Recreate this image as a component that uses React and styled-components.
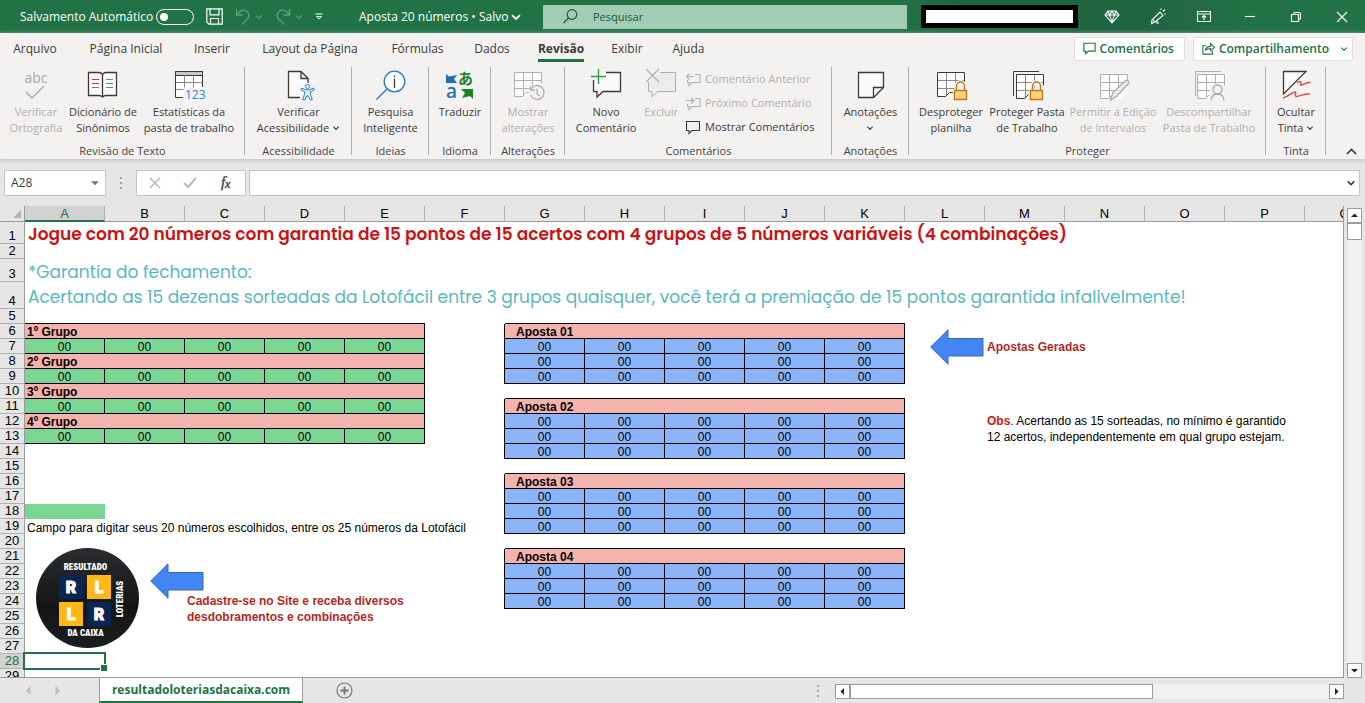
import styled, { createGlobalStyle, css } from 'styled-components';

const GlobalStyle = createGlobalStyle`
  * {
    box-sizing: border-box;
  }

  body {
    margin: 0;
    background: #e6e6e6;
    color: #3b3a39;
    font-family: 'Open Sans', 'Noto Sans', sans-serif;
    font-size: 11px;
    line-height: 16px;
  }

  button, input {
    margin: 0;
    padding: 0;
    border: 0;
    background: none;
    color: inherit;
    font: inherit;
  }

  svg {
    display: block;
    flex: none;
    overflow: visible;
  }
`;

const Page = styled.div`
  display: flex;
  flex-direction: column;
  height: 100vh;
  overflow: hidden;
`;

/* title bar */

const TitleBar = styled.header`
  display: flex;
  align-items: center;
  flex: none;
  height: 33px;
  padding-left: 20px;
  background: linear-gradient(90deg, #217346 66%, #1f6640 70%, #1f6640 84%, #217346 92%);
  color: #fff;
`;

const AutoSave = styled.label`
  display: flex;
  align-items: center;
  width: 186px;
  font-size: 12px;
  white-space: nowrap;
`;

const Toggle = styled.input`
  display: flex;
  align-items: center;
  flex: none;
  width: 38px;
  height: 16px;
  margin-left: 3px;
  padding-left: 3px;
  appearance: none;
  border: 1px solid #fff;
  border-radius: 8px;

  &::before {
    content: '';
    width: 8px;
    height: 8px;
    border-radius: 50%;
    background: #fff;
  }
`;

const QuickAccess = styled.div`
  display: flex;
  align-items: center;
  gap: 12px;
  width: 153px;
`;

const QuickButton = styled.button`
  display: flex;
  align-items: center;
  gap: 4px;
  opacity: ${({ $faded }) => ($faded ? 0.3 : 1)};
`;

const FileName = styled.button`
  display: flex;
  align-items: center;
  gap: 2px;
  width: 184px;
  font-size: 12px;
  white-space: nowrap;
`;

const SearchBox = styled.label`
  display: flex;
  align-items: center;
  flex: 1;
  gap: 15px;
  height: 24px;
  padding-left: 20px;
  background: #a0cdb3;
  color: #185c37;

  input {
    flex: 1;
    min-width: 0;
    outline: none;
    font-size: 11px;
  }

  input::placeholder {
    color: #185c37;
    opacity: 1;
  }
`;

const Account = styled.div`
  width: 157px;
  height: 23px;
  margin: 0 11px 0 14px;
  border: 5px solid #000;
  background: #fff;
`;

const WindowButton = styled.button`
  display: flex;
  justify-content: center;
  align-items: center;
  width: 46px;
  height: 33px;
`;

/* ribbon */

const Ribbon = styled.section`
  flex: none;
  background: #f3f2f1;
  box-shadow: 0 1px 5px #b8b8b8;
`;

const Tabs = styled.nav`
  display: flex;
  align-items: center;
  height: 31px;
  padding-right: 12px;
`;

const Tab = styled.button`
  display: flex;
  justify-content: center;
  width: ${({ $width }) => $width}px;
  font-size: 12px;
  white-space: nowrap;

  span {
    padding: 6px 0 2px;
    border-bottom: 3px solid transparent;
  }

  ${({ $active }) => $active && css`
    font-weight: 700;

    span {
      border-color: #217346;
    }
  `}
`;

const TabActions = styled.div`
  display: flex;
  gap: 8px;
  margin-left: auto;
`;

const ActionButton = styled.button`
  display: flex;
  align-items: center;
  gap: 4px;
  height: 24px;
  padding: 0 ${({ $end }) => $end || 10}px 0 8px;
  border: 1px solid #e1dfdd;
  border-radius: 2px;
  background: #fff;
  color: #217346;
  font-size: 12px;
  font-weight: 600;
  white-space: nowrap;
`;

const Groups = styled.div`
  display: flex;
  height: 95px;
  padding-top: 3px;
`;

const Group = styled.div`
  display: flex;
  flex-direction: column;
  justify-content: space-between;
  width: ${({ $width }) => $width}px;
  height: 92px;
  background: linear-gradient(#b3b0ad, #b3b0ad) right top / 1px 88px no-repeat;
`;

const GroupItems = styled.div`
  display: flex;
  justify-content: ${({ $start }) => ($start ? 'flex-start' : 'center')};
  padding: 0 4px 0 ${({ $start }) => $start || 4}px;
`;

const GroupName = styled.div`
  text-align: center;
  color: #444;
`;

const BigButton = styled.button`
  display: flex;
  flex-direction: column;
  align-items: center;
  flex: none;
  gap: 3px;
  width: ${({ $width }) => $width}px;
  padding-top: 2px;
  color: ${({ disabled }) => (disabled ? '#b1afad' : '#3b3a39')};
  white-space: nowrap;
`;

const BigLabel = styled.span`
  display: flex;
  justify-content: center;
  align-items: center;
  gap: 3px;
  height: 16px;
`;

const SmallList = styled.div`
  display: flex;
  flex-direction: column;
  padding-left: 4px;
`;

const SmallButton = styled.button`
  display: flex;
  align-items: center;
  gap: 4px;
  height: 24px;
  color: ${({ disabled }) => (disabled ? '#b1afad' : '#3b3a39')};
  white-space: nowrap;
`;

const Collapse = styled.button`
  display: flex;
  align-items: flex-end;
  margin-left: auto;
  padding: 0 8px 2px;
`;

/* formula bar */

const FormulaBar = styled.div`
  display: flex;
  align-items: center;
  flex: none;
  height: 47px;
  padding: 0 5px 0 4px;
`;

const BarBox = styled.div`
  display: flex;
  align-items: center;
  justify-content: space-between;
  width: ${({ $width }) => ($width ? `${$width}px` : 'auto')};
  flex: ${({ $width }) => ($width ? 'none' : '1')};
  height: 26px;
  padding: 0 ${({ $pad }) => $pad || 6}px;
  border: 1px solid #c6c6c6;
  background: #fff;

  input {
    flex: 1;
    min-width: 0;
    outline: none;
    font-size: 12px;
  }
`;

const Grip = styled.div`
  display: flex;
  justify-content: center;
  width: 30px;
`;

const Spacer = styled.div`
  width: 3px;
`;

/* sheet */

const Workspace = styled.main`
  display: flex;
  flex: 1;
  min-height: 0;
`;

const SheetFrame = styled.div`
  position: relative;
  flex: 1;
  min-width: 0;
  overflow: hidden;
  border-right: 1px solid #9b9b9b;
  border-bottom: 1px solid #9b9b9b;
  background: #fff;
`;

const Sheet = styled.table`
  width: 1385px;
  table-layout: fixed;
  border-collapse: separate;
  border-spacing: 0;
  color: #000;
  font-family: 'Liberation Sans', Arial, sans-serif;
  font-size: 12px;
  line-height: 12px;
`;

const Row = styled.tr`
  height: ${({ $height }) => $height}px;
`;

const ColumnHead = styled.th`
  height: 16px;
  padding: 1px 0 0;
  border-right: 1px solid #b1b1b1;
  border-bottom: 1px solid #9b9b9b;
  background: #e6e6e6;
  font-size: 13px;
  font-weight: 400;

  ${({ $active }) => $active && css`
    border-bottom: 2px solid #217346;
    background: #d2d2d2;
    color: #217346;
  `}
`;

const Corner = styled(ColumnHead)`
  border-right-color: #9b9b9b;

  svg {
    margin-left: 13px;
  }
`;

const RowHead = styled.th`
  padding: 0;
  border-right: 1px solid ${({ $active }) => ($active ? '#217346' : '#9b9b9b')};
  border-bottom: 1px solid #b1b1b1;
  background: ${({ $active }) => ($active ? '#d2d2d2' : '#e6e6e6')};
  color: ${({ $active }) => ($active ? '#217346' : '#000')};
  font-size: 13px;
  font-weight: 400;
  line-height: 14px;
  vertical-align: bottom;
`;

const fills = {
  head: '#f5b3ae',
  green: '#7bd694',
  blue: '#8cb4f8',
  sample: '#7bd694',
};

const Cell = styled.td`
  position: ${({ $selected }) => ($selected ? 'relative' : 'static')};
  padding: 2px 0 0 ${({ $indent }) => $indent || 0}px;
  border-right: ${({ $right }) => ($right ? '1px solid #000' : 'none')};
  border-bottom: ${({ $bottom }) => ($bottom ? '1px solid #000' : 'none')};
  background: ${({ $fill }) => fills[$fill] || 'transparent'};
  font-weight: ${({ $fill }) => ($fill === 'head' ? 700 : 400)};
  text-align: ${({ $fill }) => ($fill === 'green' || $fill === 'blue' ? 'center' : 'left')};
  white-space: nowrap;
`;

const Selection = styled.div`
  position: absolute;
  inset: -2px -1px -1px -2px;
  border: 2px solid #217346;

  &::after {
    content: '';
    position: absolute;
    right: -3px;
    bottom: -3px;
    width: 6px;
    height: 6px;
    border-top: 1px solid #fff;
    border-left: 1px solid #fff;
    background: #217346;
  }
`;

const Headline = styled.div`
  color: #c81414;
  font-family: Poppins, Inter, sans-serif;
  font-size: 17px;
  font-weight: 600;
  line-height: 20px;
`;

const Guarantee = styled.div`
  color: #5ab8be;
  font-family: Poppins, Inter, sans-serif;
  font-size: 17px;
  font-weight: 400;
  line-height: 20px;
`;

const Floating = styled.div`
  position: absolute;
  left: ${({ $x }) => $x}px;
  top: ${({ $y }) => $y}px;
`;

const Note = styled.p`
  margin: 0;
  color: ${({ $red }) => ($red ? '#b02a24' : '#000')};
  font-family: 'Liberation Sans', Arial, sans-serif;
  font-size: 12px;
  font-weight: ${({ $red }) => ($red ? 700 : 400)};
  line-height: 16px;
  white-space: nowrap;

  b {
    color: #d01515;
  }
`;

/* scroll bars and sheet tabs */

const VerticalScroll = styled.div`
  display: flex;
  flex-direction: column;
  width: 15px;
  margin: 2px 3px 0;
  background: #f1f1f1;
`;

const ScrollButton = styled.button`
  display: flex;
  justify-content: center;
  align-items: center;
  flex: none;
  width: 15px;
  height: 15px;
  border: 1px solid #9b9b9b;
  background: #fff;
`;

const Thumb = styled.div`
  flex: ${({ $grow }) => $grow || 'none'};
  height: ${({ $grow }) => ($grow ? 15 : 17)}px;
  border: 1px solid #9b9b9b;
  background: #fff;
`;

const Track = styled.div`
  flex: ${({ $grow }) => $grow || 1};
`;

const Footer = styled.footer`
  display: flex;
  flex: none;
  height: 25px;
  padding-right: 21px;
`;

const SheetNav = styled.div`
  display: flex;
  align-items: center;
  gap: 20px;
  width: 99px;
  padding-left: 24px;
`;

const SheetTab = styled.button`
  width: 204px;
  border: 1px solid #9b9b9b;
  border-top: 0;
  border-bottom: 2px solid #217346;
  background: #fff;
  color: #217346;
  font-size: 12px;
  font-weight: 700;
`;

const AddSheet = styled.button`
  display: flex;
  align-items: center;
  padding-left: 33px;
`;

const HorizontalScroll = styled.div`
  display: flex;
  width: 509px;
  height: 15px;
  margin-top: 6px;
  background: #f1f1f1;
`;

const FooterGrip = styled.div`
  display: flex;
  align-items: center;
  margin-left: auto;
  padding-right: 15px;
`;

function Chevron({ size = 8, up = false }) {
  return (
    <svg width={size} height={size} viewBox="0 0 8 8" fill="none" stroke="currentColor" strokeWidth="1.2">
      <path d={up ? 'M0.7 5.8 4 2.5l3.3 3.3' : 'M1.4 2.7 4 5.3l2.6-2.6'} />
    </svg>
  );
}

function Triangle({ dir, color = '#222', size = 7 }) {
  const points = {
    up: '0,5 7,5 3.5,1.5',
    down: '0,2 7,2 3.5,5.5',
    left: '5,0 5,7 1.5,3.5',
    right: '2,0 2,7 5.5,3.5',
  };

  return (
    <svg width={size} height={size} viewBox="0 0 7 7">
      <polygon points={points[dir]} fill={color} />
    </svg>
  );
}

function Dots() {
  return (
    <svg width="3" height="12" viewBox="0 0 3 12" fill="#a6a6a6">
      <path d="M0 0h2v2H0zM0 5h2v2H0zM0 10h2v2H0z" />
    </svg>
  );
}

function Icon({ children }) {
  return (
    <svg width="32" height="32" viewBox="0 0 32 32" fill="none" stroke="#3b3a39">
      {children}
    </svg>
  );
}

function GridShape({ x = 2.5, y = 3.5, color = '#3b3a39', line = '#8a8886' }) {
  return (
    <g transform={`translate(${x} ${y})`}>
      <path d="M0 0h27v18l-7 6H0z" fill="#fff" stroke="none" opacity=".8" />
      <path d="M9 0v24M18 0v18M0 8h27M0 16h20" stroke={line} />
      <path d="M27 11V0H0v24h8l4-4h4" stroke={color} />
    </g>
  );
}

function Lock() {
  return (
    <g>
      <path d="M18 20h14v12H18z" fill="#f3f2f1" stroke="none" />
      <path d="M21.5 22v-5a4 4 0 0 1 8 0v5" stroke="#f3f2f1" strokeWidth="4" />
      <path d="M21.5 22v-5a4 4 0 0 1 8 0v5" stroke="#c8731c" strokeWidth="1.3" />
      <path d="M19.5 21.5h12v9h-12z" fill="#fbd277" stroke="#c8731c" strokeWidth="1.3" />
    </g>
  );
}

const icons = {
  spelling: (
    <Icon>
      <text x="16" y="14" textAnchor="middle" fontSize="14" fill="#a9a7a5" stroke="none">abc</text>
      <path d="M6 23l6 6 12-12" stroke="#a9a7a5" strokeWidth="1.3" />
    </Icon>
  ),
  thesaurus: (
    <Icon>
      <path d="M15.5 5.5c-1-1.5-2-2-3.5-2H1.5v23H12c1.5 0 2.5.5 3.5 1.5 1-1 2-1.5 3.5-1.5h10.5v-23H19c-1.5 0-2.5.5-3.5 2z" fill="#fafafa" strokeWidth="1.3" />
      <path d="M15.5 5.5V28" strokeWidth="1.3" />
      <path d="M5 10.5h7M5 14.5h7" stroke="#d13438" />
      <path d="M5 18.5h7M19 10.5h7M19 14.5h7M19 18.5h7" stroke="#7a8088" />
    </Icon>
  ),
  statistics: (
    <Icon>
      <path d="M2.5 2.5h27v26h-27z" fill="#fff" stroke="none" />
      <path d="M2.5 2.5h27v4h-27z" fill="#c8c6c4" />
      <path d="M11.5 6.5v12M20.5 6.5v12M2.5 13.5h27M2.5 20.5h8" stroke="#8a8886" />
      <path d="M10 28.5H2.5v-26h27V18" />
      <path d="M11 19h21v12H11z" fill="#f3f2f1" stroke="none" />
      <text x="12" y="30" fontSize="12" fill="#2b88d0" stroke="none">123</text>
    </Icon>
  ),
  accessibility: (
    <Icon>
      <path d="M17 28.5H5.5v-26H18l7 7V14" fill="#fafafa" strokeWidth="1.3" />
      <path d="M18 2.5v7h7" strokeWidth="1.3" />
      <circle cx="24.5" cy="17.5" r="2" fill="#fff" stroke="#2b7cc4" />
      <path d="M18.5 19l4 1.8h4l4-1.8.7 1.8-4 2 .3 2.7 1.8 5-1.8.7-3-5-3 5-1.8-.7 1.8-5 .3-2.7-4-2z" fill="#e5f1fb" stroke="#2b7cc4" />
    </Icon>
  ),
  lookup: (
    <Icon>
      <circle cx="19.5" cy="12.5" r="10.3" fill="#fff" stroke="#2b7cc4" strokeWidth="1.3" />
      <path d="M12 20L1.5 30.5" stroke="#2b7cc4" strokeWidth="1.5" />
      <path d="M19.5 9.5V19M19.5 6.5V8" strokeWidth="1.3" />
    </Icon>
  ),
  translate: (
    <Icon>
      <path d="M2 5l3 2.5L13 6l-3 4 3 4H2z" fill="#1f6fb8" stroke="none" />
      <text x="2" y="29" fontSize="19" fontWeight="600" fill="#1f6fb8" stroke="none">a</text>
      <text x="14" y="15" fontSize="15" fontWeight="700" fontFamily="'Noto Sans CJK JP', sans-serif" fill="#1b8427" stroke="none">あ</text>
      <path d="M17 20h12v10l-3-3-8 2 3-5z" fill="#1b8427" stroke="none" />
    </Icon>
  ),
  changes: (
    <Icon>
      <GridShape color="#b1afad" line="#b1afad" />
      <circle cx="25" cy="24" r="8.5" fill="#f3f2f1" stroke="none" />
      <path d="M19 20a7 7 0 1 1-.5 6M18.5 16.5V21H23M25 19.5V25l3 2" stroke="#b1afad" strokeWidth="1.3" />
    </Icon>
  ),
  newComment: (
    <Icon>
      <path d="M3.5 12v10.500H7V28l6-5.500h17.500v-19H13" fill="#fafafa" stroke="none" />
      <path d="M3.500 11v11.500H7V28l6-5.500h17.500v-19H16" strokeWidth="1.3" />
      <path d="M8.5 0v15M1 7.5h15" stroke="#2f9e44" strokeWidth="1.3" />
    </Icon>
  ),
  deleteComment: (
    <Icon>
      <path d="M3.5 13v9.5H7V28l6-5.5h17.5v-19H15" fill="#ececec" stroke="#b1afad" />
      <path d="M1 0l13 13M14 0L1 13" stroke="#b1afad" strokeWidth="1.2" />
    </Icon>
  ),
  notes: (
    <Icon>
      <path d="M3.5 3.5h25v15l-10 10h-15z" fill="#fafafa" strokeWidth="1.3" />
      <path d="M28.5 18.5h-10v10" strokeWidth="1.3" />
    </Icon>
  ),
  unprotectSheet: (
    <Icon>
      <GridShape />
      <Lock />
    </Icon>
  ),
  protectBook: (
    <Icon>
      <path d="M2.5 27V2.5H28" />
      <GridShape x={5.5} y={5.5} />
      <Lock />
    </Icon>
  ),
  editRanges: (
    <Icon>
      <GridShape x={3.5} y={5.5} color="#b1afad" line="#b1afad" />
      <path d="M13.5 31l2.5-7.5L28.5 11.5q3.5-1 3.5 2.5L20 27z" fill="#ebeae9" stroke="#a9a7a5" strokeWidth="1.2" />
    </Icon>
  ),
  unshareBook: (
    <Icon>
      <path d="M2.5 27V2.5H28" stroke="#b1afad" />
      <GridShape x={4.5} y={5.5} color="#b1afad" line="#b1afad" />
      <path d="M17 15h14v17H17z" fill="#f3f2f1" stroke="none" />
      <circle cx="24.5" cy="20.5" r="4.5" stroke="#a9a7a5" strokeWidth="1.3" />
      <path d="M18 31.5c0-9 13-9 13 0" stroke="#a9a7a5" strokeWidth="1.3" />
    </Icon>
  ),
  hideInk: (
    <Icon>
      <path d="M3.5 2.5H26L3.5 25z" fill="#fafafa" strokeWidth="1.3" />
      <path d="M17 14c4-3 5-1 3.5 2 3 0 6-3 10-2.5M3 29c5-1 9-6 12-6 2 0-1 4 1 4.5 4 0 8-3 14-2.5" stroke="#e0484c" strokeWidth="1.5" />
    </Icon>
  ),
};

function BubbleIcon({ arrow }) {
  return (
    <svg width="15" height="15" viewBox="0 0 15 15" fill="none" stroke="currentColor" strokeWidth="1.1">
      <path d={arrow ? 'M9 2.5h5v8H6l-3 3v-3H1.5V8' : 'M.5 1.5h13v9H6l-3 3v-3H.5z'} />
      {arrow === 'left' && <path d="M8 4.5H.5M3.5 1.5l-3 3 3 3" />}
      {arrow === 'right' && <path d="M0 4.5h8M5 1.5l3 3-3 3" />}
    </svg>
  );
}

function RibbonButton({
  icon, width, lines, disabled, menu,
}) {
  return (
    <BigButton type="button" $width={width} disabled={disabled}>
      {icons[icon]}
      <span>
        {lines.map((line, index) => (
          <BigLabel key={line || 'menu'}>
            {line}
            {menu && index === lines.length - 1 && <Chevron />}
          </BigLabel>
        ))}
      </span>
    </BigButton>
  );
}

const tabs = [
  ['Arquivo', 70],
  ['Página Inicial', 112],
  ['Inserir', 60],
  ['Layout da Página', 136],
  ['Fórmulas', 79],
  ['Dados', 70],
  ['Revisão', 68],
  ['Exibir', 64],
  ['Ajuda', 59],
];

const columns = 'ABCDEFGHIJKLMNOPQ'.split('');
const rows = Array.from({ length: 29 }, (_, index) => index + 1);
const rowHeights = { 1: 22, 3: 23, 4: 27 };
const betStarts = [6, 11, 16, 21];

// column index 0-4 holds the chosen groups, 6-10 the generated bets
function fillOf(row, column) {
  if (column <= 4 && row >= 6 && row <= 13) {
    return row % 2 === 0 ? 'head' : 'green';
  }
  if (column >= 6 && column <= 10) {
    const start = betStarts.find((first) => row >= first && row <= first + 3);
    if (start) {
      return start === row ? 'head' : 'blue';
    }
  }
  return row === 18 && column === 0 ? 'sample' : null;
}

function isBoxed(row, column) {
  const fill = fillOf(row, column);
  return fill !== null && fill !== 'sample';
}

const wideTexts = {
  1: <Headline>Jogue com 20 números com garantia de 15 pontos de 15 acertos com 4 grupos de 5 números variáveis (4 combinações)</Headline>,
  3: <Guarantee>*Garantia do fechamento:</Guarantee>,
  4: <Guarantee>Acertando as 15 dezenas sorteadas da Lotofácil entre 3 grupos quaisquer, você terá a premiação de 15 pontos garantida infalivelmente!</Guarantee>,
};

function SheetRow({ row }) {
  const cells = [];

  if (wideTexts[row]) {
    cells.push(<Cell key="text" colSpan={17} $indent={3}>{wideTexts[row]}</Cell>);
  } else {
    for (let column = 0; column < columns.length; column += 1) {
      const fill = fillOf(row, column);
      let span = 1;
      let content = null;
      let indent = 0;

      if (fill === 'head') {
        span = 5;
        content = column === 0 ? `${row / 2 - 2}º Grupo` : `Aposta 0${betStarts.indexOf(row) + 1}`;
        indent = column === 0 ? 2 : 11;
      } else if (fill === 'green' || fill === 'blue') {
        content = '00';
      } else if (row === 19 && column === 0) {
        span = 6;
        content = 'Campo para digitar seus 20 números escolhidos, entre os 25 números da Lotofácil';
        indent = 2;
      }

      const last = column + span - 1;
      cells.push(
        <Cell
          key={columns[column]}
          colSpan={span}
          $fill={fill}
          $indent={indent}
          $right={isBoxed(row, last) || isBoxed(row, last + 1)}
          $bottom={isBoxed(row, column) || (span === 1 && isBoxed(row + 1, column))}
          $selected={row === 28 && column === 0}
        >
          {content}
          {row === 28 && column === 0 && <Selection />}
        </Cell>,
      );
      column = last;
    }
  }

  return (
    <Row $height={rowHeights[row] || 15}>
      <RowHead scope="row" $active={row === 28}>{row}</RowHead>
      {cells}
    </Row>
  );
}

function Arrow() {
  return (
    <svg width="54" height="36" viewBox="0 0 54 36">
      <path d="M.7 18 18 .8v8.700h35v17.500H18v8.200z" fill="#4285f4" stroke="#3b67ab" />
    </svg>
  );
}

function LogoLetter({ x, y, letter }) {
  const isR = letter === 'R';

  return (
    <g>
      <rect x={x} y={y} width="24" height="24" fill={isR ? '#0b2553' : '#fdb813'} />
      <text x={x + 12} y={y + 18} fontSize="16" textAnchor="middle" stroke="#fff">{letter}</text>
    </g>
  );
}

function Logo() {
  return (
    <svg width="104" height="102" viewBox="0 0 104 102" fill="#fff" fontFamily="Roboto, sans-serif" fontWeight="900">
      <defs>
        <linearGradient id="disc" x1="0" y1="0" x2="0" y2="1">
          <stop offset="0" stopColor="#2a2c30" />
          <stop offset="0.6" stopColor="#131415" />
          <stop offset="1" stopColor="#1c1d1f" />
        </linearGradient>
      </defs>
      <ellipse cx="51.5" cy="50" rx="51.5" ry="50" fill="url(#disc)" />
      <g fontFamily="'Roboto Condensed', Roboto, sans-serif" fontSize="9" textAnchor="middle">
        <text x="49.5" y="22">RESULTADO</text>
        <text x="49.5" y="88">DA CAIXA</text>
        <text transform="translate(87 51) rotate(-90)">LOTERIAS</text>
      </g>
      <LogoLetter x={23} y={27} letter="R" />
      <LogoLetter x={51} y={27} letter="L" />
      <LogoLetter x={23} y={54} letter="L" />
      <LogoLetter x={51} y={54} letter="R" />
    </svg>
  );
}

function WindowControls() {
  const controls = [
    ['Premium', 'M4 2h8l3 4-7 8-7-8zM1 6h14M5.5 6 8 13l2.5-7M4 2l1.5 4L8 2l2.5 4L12 2'],
    ['Novidades', 'M2 11 10 3l3 3.5L5 13l-3.5 1.5zM3 11l2 2.5M7 12v2h2M11 1V-.5M13 2.5 15 .5M14.5 5H16'],
    ['Opções da faixa', 'M1.5 2.5h13v10h-13zM1.5 5h13M8 11V6.5M6 8.5l2-2 2 2'],
    ['Minimizar', 'M3 7.5h10'],
    ['Restaurar', 'M3.5 5.5h7v7h-7zM5.5 5.5V5A1.5 1.5 0 0 1 7 3.5h4A1.5 1.5 0 0 1 12.5 5v4a1.5 1.5 0 0 1-1.5 1.5h-.5'],
    ['Fechar', 'M3 3l10 10M13 3 3 13'],
  ];

  return controls.map(([name, path]) => (
    <WindowButton key={name} type="button" aria-label={name}>
      <svg width="16" height="16" viewBox="0 0 16 16" fill="none" stroke="#fff" strokeWidth="1.1">
        <path d={path} />
      </svg>
    </WindowButton>
  ));
}

export default function App() {
  return (
    <Page>
      <GlobalStyle />
      <TitleBar>
        <AutoSave>
          Salvamento Automático
          <Toggle type="checkbox" role="switch" />
        </AutoSave>
        <QuickAccess>
          <QuickButton type="button" aria-label="Salvar">
            <svg width="17" height="17" viewBox="0 0 17 17" fill="none" stroke="#fff" strokeWidth="1.2">
              <path d="M.8.8h15.4v15.4H3L.8 14zM4 .8v6h9v-6M4.5 16v-5.5h8V16" />
            </svg>
          </QuickButton>
          <QuickButton type="button" aria-label="Desfazer" $faded>
            <svg width="16" height="17" viewBox="0 0 16 17" fill="none" stroke="#fff" strokeWidth="1.3">
              <path d="M1.5 1v6h6M1.5 7C5 2 9 1 12 3.5s2 6 0 8L7 16" />
            </svg>
            <Chevron />
          </QuickButton>
          <QuickButton type="button" aria-label="Refazer" $faded>
            <svg width="16" height="17" viewBox="0 0 16 17" fill="none" stroke="#fff" strokeWidth="1.3">
              <path d="M14.5 1v6h-6M14.5 7C11 2 7 1 4 3.5s-2 6 0 8L9 16" />
            </svg>
            <Chevron />
          </QuickButton>
          <QuickButton type="button" aria-label="Personalizar">
            <svg width="8" height="8" viewBox="0 0 8 8" fill="none" stroke="#fff">
              <path d="M.5 1h7M1.5 3.5 4 6l2.5-2.5z" />
            </svg>
          </QuickButton>
        </QuickAccess>
        <FileName type="button">
          Aposta 20 números • Salvo
          <Chevron size={12} />
        </FileName>
        <SearchBox>
          <svg width="15" height="15" viewBox="0 0 15 15" fill="none" stroke="#185c37" strokeWidth="1.2">
            <circle cx="9" cy="5.5" r="4.8" />
            <path d="M5.5 9 .5 14" />
          </svg>
          <input type="text" placeholder="Pesquisar" aria-label="Pesquisar" />
        </SearchBox>
        <Account />
        <WindowControls />
      </TitleBar>

      <Ribbon>
        <Tabs>
          {tabs.map(([name, width]) => (
            <Tab key={name} type="button" $width={width} $active={name === 'Revisão'}>
              <span>{name}</span>
            </Tab>
          ))}
          <TabActions>
            <ActionButton type="button">
              <svg width="13" height="13" viewBox="0 0 15 15" fill="none" stroke="currentColor" strokeWidth="1.3">
                <path d="M1 1.5h13v9H6l-3 3v-3H1z" />
              </svg>
              Comentários
            </ActionButton>
            <ActionButton type="button" $end={4}>
              <svg width="13" height="13" viewBox="0 0 12 12" fill="none" stroke="currentColor">
                <path d="M4 3.5H.8v7.7h8.7V8M3 8c.5-3 2.5-4 5-4V1.5l3.5 3.5L8 8V6C6 6 4.5 6 3 8z" />
              </svg>
              Compartilhamento
              <Spacer />
              <Chevron />
            </ActionButton>
          </TabActions>
        </Tabs>

        <Groups>
          <Group $width={245}>
            <GroupItems $start={4}>
              <RibbonButton icon="spelling" width={64} lines={['Verificar', 'Ortografia']} disabled />
              <RibbonButton icon="thesaurus" width={70} lines={['Dicionário de', 'Sinônimos']} />
              <RibbonButton icon="statistics" width={102} lines={['Estatísticas da', 'pasta de trabalho']} />
            </GroupItems>
            <GroupName>Revisão de Texto</GroupName>
          </Group>
          <Group $width={107}>
            <GroupItems>
              <RibbonButton icon="accessibility" width={98} lines={['Verificar', 'Acessibilidade']} menu />
            </GroupItems>
            <GroupName>Acessibilidade</GroupName>
          </Group>
          <Group $width={77}>
            <GroupItems>
              <RibbonButton icon="lookup" width={68} lines={['Pesquisa', 'Inteligente']} />
            </GroupItems>
            <GroupName>Ideias</GroupName>
          </Group>
          <Group $width={62}>
            <GroupItems>
              <RibbonButton icon="translate" width={54} lines={['Traduzir']} />
            </GroupItems>
            <GroupName>Idioma</GroupName>
          </Group>
          <Group $width={74}>
            <GroupItems>
              <RibbonButton icon="changes" width={66} lines={['Mostrar', 'alterações']} disabled />
            </GroupItems>
            <GroupName>Alterações</GroupName>
          </Group>
          <Group $width={267}>
            <GroupItems $start={7}>
              <RibbonButton icon="newComment" width={68} lines={['Novo', 'Comentário']} />
              <RibbonButton icon="deleteComment" width={42} lines={['Excluir']} disabled />
              <SmallList>
                <SmallButton type="button" disabled>
                  <BubbleIcon arrow="left" />
                  Comentário Anterior
                </SmallButton>
                <SmallButton type="button" disabled>
                  <BubbleIcon arrow="right" />
                  Próximo Comentário
                </SmallButton>
                <SmallButton type="button">
                  <BubbleIcon />
                  Mostrar Comentários
                </SmallButton>
              </SmallList>
            </GroupItems>
            <GroupName>Comentários</GroupName>
          </Group>
          <Group $width={77}>
            <GroupItems>
              <RibbonButton icon="notes" width={68} lines={['Anotações', '']} menu />
            </GroupItems>
            <GroupName>Anotações</GroupName>
          </Group>
          <Group $width={357}>
            <GroupItems $start={4}>
              <RibbonButton icon="unprotectSheet" width={76} lines={['Desproteger', 'planilha']} />
              <RibbonButton icon="protectBook" width={76} lines={['Proteger Pasta', 'de Trabalho']} />
              <RibbonButton icon="editRanges" width={96} lines={['Permitir a Edição', 'de Intervalos']} disabled />
              <RibbonButton icon="unshareBook" width={96} lines={['Descompartilhar', 'Pasta de Trabalho']} disabled />
            </GroupItems>
            <GroupName>Proteger</GroupName>
          </Group>
          <Group $width={60}>
            <GroupItems>
              <RibbonButton icon="hideInk" width={52} lines={['Ocultar', 'Tinta']} menu />
            </GroupItems>
            <GroupName>Tinta</GroupName>
          </Group>
          <Collapse type="button" aria-label="Recolher faixa">
            <Chevron size={11} up />
          </Collapse>
        </Groups>
      </Ribbon>

      <FormulaBar>
        <BarBox $width={102}>
          <input type="text" defaultValue="A28" aria-label="Caixa de nome" />
          <button type="button" aria-label="Nomes"><Triangle dir="down" color="#777" size={8} /></button>
        </BarBox>
        <Grip><Dots /></Grip>
        <BarBox $width={110} $pad={11}>
          <button type="button" aria-label="Cancelar">
            <svg width="14" height="14" viewBox="0 0 14 14" stroke="#bdbdbd" strokeWidth="1.6">
              <path d="M2 2l10 10M12 2 2 12" />
            </svg>
          </button>
          <button type="button" aria-label="Inserir">
            <svg width="14" height="14" viewBox="0 0 14 14" fill="none" stroke="#bdbdbd" strokeWidth="2.2">
              <path d="M1 7l4 4 8-9" />
            </svg>
          </button>
          <button type="button" aria-label="Inserir função">
            <svg width="16" height="16" viewBox="0 0 16 16" fill="#444" fontFamily="'Liberation Serif', serif" fontStyle="italic">
              <text x="3" y="12" fontSize="15" stroke="#444" strokeWidth=".4">f</text>
              <text x="7" y="13" fontSize="12" stroke="#444" strokeWidth=".4">x</text>
            </svg>
          </button>
        </BarBox>
        <Spacer />
        <BarBox $pad={3}>
          <input type="text" aria-label="Barra de fórmulas" />
          <Chevron size={10} />
        </BarBox>
      </FormulaBar>

      <Workspace>
        <SheetFrame>
          <Sheet>
            <colgroup>
              <col width="25" />
              {columns.map((name) => <col key={name} width="80" />)}
            </colgroup>
            <thead>
              <tr>
                <Corner aria-label="Selecionar tudo">
                  <svg width="9" height="9" viewBox="0 0 9 9"><path d="M8 0v8H0z" fill="#b1b1b1" /></svg>
                </Corner>
                {columns.map((name) => (
                  <ColumnHead key={name} scope="col" $active={name === 'A'}>{name}</ColumnHead>
                ))}
              </tr>
            </thead>
            <tbody>
              {rows.map((row) => <SheetRow key={row} row={row} />)}
            </tbody>
          </Sheet>

          <Floating $x={930} $y={123}><Arrow /></Floating>
          <Floating $x={987} $y={133}>
            <Note $red>Apostas Geradas</Note>
          </Floating>
          <Floating $x={987} $y={207}>
            <Note>
              <b>Obs</b>
              . Acertando as 15 sorteadas, no mínimo é garantido
              <br />
              12 acertos, independentemente em qual grupo estejam.
            </Note>
          </Floating>
          <Floating $x={36} $y={342}><Logo /></Floating>
          <Floating $x={150} $y={357}><Arrow /></Floating>
          <Floating $x={187} $y={387}>
            <Note $red>
              Cadastre-se no Site e receba diversos
              <br />
              desdobramentos e combinações
            </Note>
          </Floating>
        </SheetFrame>
        <VerticalScroll>
          <ScrollButton type="button" aria-label="Rolar para cima"><Triangle dir="up" /></ScrollButton>
          <Thumb />
          <Track />
          <ScrollButton type="button" aria-label="Rolar para baixo"><Triangle dir="down" /></ScrollButton>
        </VerticalScroll>
      </Workspace>

      <Footer>
        <SheetNav>
          <Triangle dir="left" color="#bdbdbd" size={9} />
          <Triangle dir="right" color="#bdbdbd" size={9} />
        </SheetNav>
        <SheetTab type="button">resultadoloteriasdacaixa.com</SheetTab>
        <AddSheet type="button" aria-label="Nova planilha">
          <svg width="17" height="17" viewBox="0 0 17 17" fill="none" stroke="#777" strokeWidth="1.2">
            <circle cx="8.5" cy="8.5" r="7.5" />
            <path d="M8.5 4.5v8M4.5 8.5h8" strokeWidth="1.8" />
          </svg>
        </AddSheet>
        <FooterGrip><Dots /></FooterGrip>
        <HorizontalScroll>
          <ScrollButton type="button" aria-label="Rolar para a esquerda"><Triangle dir="left" /></ScrollButton>
          <Thumb $grow={302} />
          <Track $grow={177} />
          <ScrollButton type="button" aria-label="Rolar para a direita"><Triangle dir="right" /></ScrollButton>
        </HorizontalScroll>
      </Footer>
    </Page>
  );
}
